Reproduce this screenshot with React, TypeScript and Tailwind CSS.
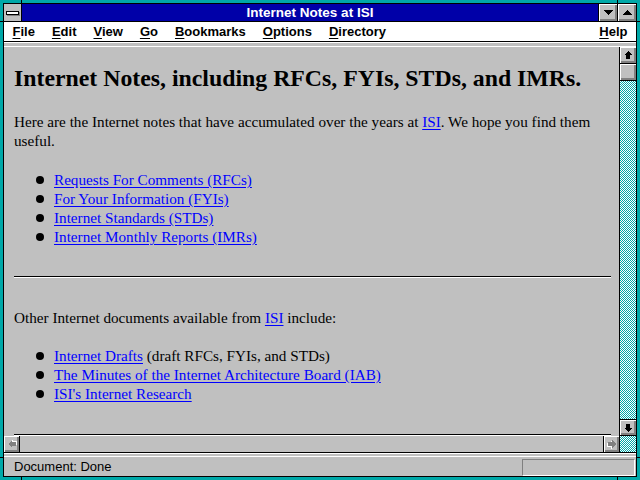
import React from 'react'

// Windows 3.1 style Netscape window

const bevel =
  'bg-[#c0c0c0] shadow-[inset_1px_1px_0_#ffffff,inset_-1px_-1px_0_#808080,inset_-2px_-2px_0_#808080]'

function Arrow({ dir, disabled }: { dir: 'up' | 'down' | 'left' | 'right'; disabled?: boolean }) {
  const rot = { up: 0, right: 90, down: 180, left: 270 }[dir]
  const d = 'M4 0 L8 4 H6 V8 H2 V4 H0 Z'
  return (
    <svg width="10" height="10" viewBox="-1 -1 10 10" shapeRendering="crispEdges">
      <g transform={`rotate(${rot} 4 4)`}>
        {disabled && <path d={d} fill="#ffffff" transform="translate(1 1)" />}
        <path d={d} fill={disabled ? '#808080' : '#000000'} />
      </g>
    </svg>
  )
}

function Triangle({ up }: { up?: boolean }) {
  return (
    <svg width="9" height="5" viewBox="0 0 9 5" shapeRendering="crispEdges">
      <path d={up ? 'M4.5 0 L9 5 H0 Z' : 'M0 0 H9 L4.5 5 Z'} fill="#000000" />
    </svg>
  )
}

function MenuItem({ k, rest }: { k: string; rest: string }) {
  return (
    <span className="px-[8.5px]">
      <span className="underline underline-offset-2">{k}</span>
      {rest}
    </span>
  )
}

function Link({ children }: { children: React.ReactNode }) {
  return <a className="text-[#0000ff] underline underline-offset-[2px]">{children}</a>
}

function Item({ children }: { children: React.ReactNode }) {
  return (
    <li className="flex items-center h-[19px]">
      <span className="w-[8px] h-[8px] rounded-full bg-black shrink-0" />
      <span className="ml-[10px] whitespace-nowrap">{children}</span>
    </li>
  )
}

export default function App() {
  return (
    <div className="relative w-[640px] h-[480px] bg-[#00a8a8] p-[3px]">
      {/* frame corner ticks */}
      <div className="absolute left-[21px] top-0 w-px h-[3px] bg-black" />
      <div className="absolute left-[617px] top-0 w-px h-[3px] bg-black" />
      <div className="absolute left-[21px] bottom-0 w-px h-[3px] bg-black" />
      <div className="absolute left-[617px] bottom-0 w-px h-[3px] bg-black" />
      <div className="absolute left-0 top-[21px] w-[3px] h-px bg-black" />
      <div className="absolute right-0 top-[21px] w-[3px] h-px bg-black" />
      <div className="absolute left-0 top-[457px] w-[3px] h-px bg-black" />
      <div className="absolute right-0 top-[457px] w-[3px] h-px bg-black" />

      <div className="h-full border border-black flex flex-col bg-[#c0c0c0] font-['Liberation_Sans',Arial,sans-serif]">
        {/* title bar */}
        <div className="flex h-[18px] border-b border-black bg-[#0000a8] shrink-0">
          <div className="w-[18px] border-r border-black bg-[#c0c0c0] flex items-center justify-center">
            <div className="w-[13px] h-[4px] bg-white border border-black shadow-[1px_1px_0_#808080]" />
          </div>
          <div className="flex-1 flex items-center justify-center text-white font-bold text-[13.5px] leading-none">
            Internet Notes at ISI
          </div>
          <div className={`w-[19px] border-l border-black flex items-center justify-center ${bevel}`}>
            <Triangle />
          </div>
          <div className={`w-[19px] border-l border-black flex items-center justify-center ${bevel}`}>
            <Triangle up />
          </div>
        </div>

        {/* menu bar */}
        <div className="flex items-center h-[20px] border-b border-black bg-white text-[13px] font-bold text-black shrink-0">
          <MenuItem k="F" rest="ile" />
          <MenuItem k="E" rest="dit" />
          <MenuItem k="V" rest="iew" />
          <MenuItem k="G" rest="o" />
          <MenuItem k="B" rest="ookmarks" />
          <MenuItem k="O" rest="ptions" />
          <MenuItem k="D" rest="irectory" />
          <div className="flex-1" />
          <MenuItem k="H" rest="elp" />
        </div>

        <div className="h-[5px] border-t border-white border-b border-black shrink-0" />

        {/* main viewport */}
        <div className="h-[406px] border-b border-black flex flex-col shrink-0">
          <div className="flex h-[389px]">
            <div className="flex-1 overflow-hidden pl-[10px] pr-[8px] font-['Liberation_Serif','Times_New_Roman',serif] text-black text-[15.2px] leading-[19px]">
              <h1 className="mt-[17px] text-[23.8px] leading-[28px] font-bold whitespace-nowrap">
                Internet Notes, including RFCs, FYIs, STDs, and IMRs.
              </h1>
              <p className="mt-[20px] whitespace-nowrap">
                Here are the Internet notes that have accumulated over the years at <Link>ISI</Link>. We hope you find them
                <br />
                useful.
              </p>
              <ul className="mt-[20px] pl-[22px]">
                <Item><Link>Requests For Comments (RFCs)</Link></Item>
                <Item><Link>For Your Information (FYIs)</Link></Item>
                <Item><Link>Internet Standards (STDs)</Link></Item>
                <Item><Link>Internet Monthly Reports (IMRs)</Link></Item>
              </ul>
              <hr className="mt-[30px] border-0 border-t border-b border-t-black border-b-white" />
              <p className="mt-[30px] whitespace-nowrap">
                Other Internet documents available from <Link>ISI</Link> include:
              </p>
              <ul className="mt-[19px] pl-[22px]">
                <Item><Link>Internet Drafts</Link> (draft RFCs, FYIs, and STDs)</Item>
                <Item><Link>The Minutes of the Internet Architecture Board (IAB)</Link></Item>
                <Item><Link>ISI's Internet Research</Link></Item>
              </ul>
              <hr className="mt-[31px] border-0 border-t border-b border-t-black border-b-white" />
            </div>

            {/* vertical scrollbar */}
            <div className="w-[17px] border-l border-black flex flex-col">
              <div className={`h-[17px] border-b border-black flex items-center justify-center ${bevel}`}>
                <Arrow dir="up" />
              </div>
              <div className={`h-[17px] border-b border-black ${bevel}`} />
              <div className="flex-1 bg-[repeating-conic-gradient(#00a8a8_0_25%,#ffffff_0_50%)] bg-[length:2px_2px]" />
              <div className={`h-[17px] border-t border-black border-b flex items-center justify-center ${bevel}`}>
                <Arrow dir="down" />
              </div>
            </div>
          </div>

          {/* horizontal scrollbar */}
          <div className="flex h-[16px]">
            <div className={`w-[16px] border-r border-black flex items-center justify-center ${bevel}`}>
              <Arrow dir="left" disabled />
            </div>
            <div className="flex-1 bg-[#c0c0c0]" />
            <div className={`w-[16px] border-l border-black flex items-center justify-center ${bevel}`}>
              <Arrow dir="right" disabled />
            </div>
            <div className="w-[17px] border-l border-black bg-[repeating-conic-gradient(#00a8a8_0_25%,#ffffff_0_50%)] bg-[length:2px_2px]" />
          </div>
        </div>

        <div className="h-[4px] border-t border-white border-b border-black shrink-0" />

        {/* status bar */}
        <div className="flex items-start h-[19px] pt-[2px] pl-[10px] pr-[1px] shrink-0">
          <div className="flex-1 text-[13px] leading-[15px] text-black">Document: Done</div>
          <div className="w-[113px] h-[17px] border border-t-[#808080] border-l-[#808080] border-b-white border-r-white" />
        </div>
      </div>
    </div>
  )
}
